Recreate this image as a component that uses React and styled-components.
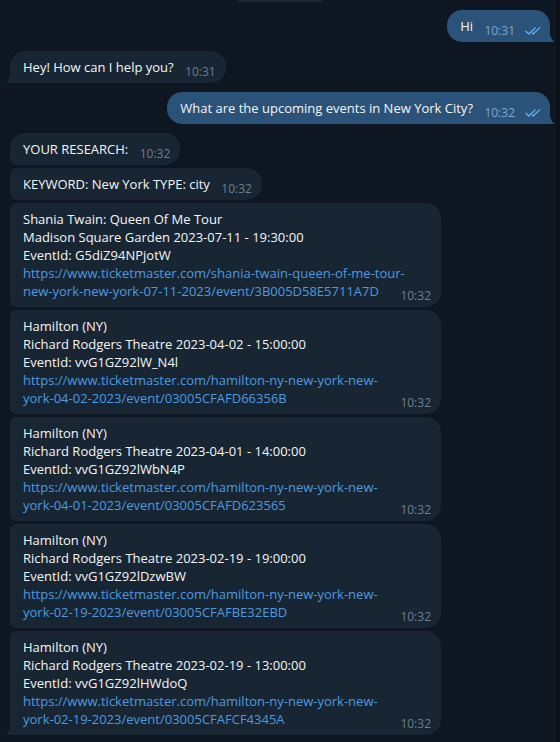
import styled, { createGlobalStyle, css } from "styled-components";

const GlobalStyle = createGlobalStyle`
  body {
    margin: 0;
    background: #0e1621;
    font-family: "Open Sans", "Noto Sans", sans-serif;
    -webkit-font-smoothing: antialiased;
  }
`;

const Page = styled.div`
  display: flex;
  height: 742px;
  overflow: hidden;
  background: #0e1621;
`;

const Feed = styled.div`
  flex: 1;
  display: flex;
  flex-direction: column;
  gap: 9px;
  padding: 0 6px 0 10px;
`;

const Scrollbar = styled.div`
  width: 4px;
  background: #0b1118;
`;

const DatePill = styled.div`
  align-self: center;
  width: 84px;
  height: 2px;
  margin-bottom: -1px;
  background: #1b2733;
  border-radius: 0 0 8px 8px;
`;

const Group = styled.div`
  display: flex;
  flex-direction: column;
  gap: 3px;
`;

const BIG = 15;
const SMALL = 6;

const radius = ({ $out, $pos }) => {
  const top = $pos === "single" || $pos === "first" ? BIG : SMALL;
  const bottom = $pos === "single" || $pos === "last" ? 0 : SMALL;
  return $out
    ? `${BIG}px ${BIG}px ${bottom}px ${BIG}px`
    : `${top}px ${BIG}px ${BIG}px ${bottom}px`;
};

const Bubble = styled.div`
  position: relative;
  align-self: ${(p) => (p.$out ? "flex-end" : "flex-start")};
  display: grid;
  box-sizing: border-box;
  width: ${(p) => (p.$full ? "431px" : "auto")};
  max-width: 431px;
  padding: 7px ${(p) => (p.$out ? 8 : 10)}px 7px 13px;
  background: ${(p) => (p.$out ? "#2b5278" : "#182533")};
  color: #f5f5f5;
  font-size: 13px;
  line-height: 18px;
  border-radius: ${radius};

  ${(p) =>
    (p.$pos === "single" || p.$pos === "last") &&
    css`
      &::after {
        content: "";
        position: absolute;
        bottom: 0;
        width: 6px;
        height: 10px;
        ${p.$out ? "right: -6px;" : "left: -6px;"}
        background: radial-gradient(
          6px 10px at ${p.$out ? "100% 0" : "0 0"},
          transparent 98%,
          ${p.$out ? "#2b5278" : "#182533"} 100%
        );
      }
    `}
`;

const Body = styled.div`
  grid-area: 1 / 1;
  white-space: nowrap;
`;

const Line = styled.div``;

const Link = styled.a`
  display: block;
  color: #4a9be0;
  text-decoration: none;
`;

const Spacer = styled.span`
  display: inline-block;
  width: ${(p) => (p.$out ? 69 : 42)}px;
`;

const Meta = styled.div`
  grid-area: 1 / 1;
  justify-self: end;
  align-self: end;
  display: flex;
  align-items: center;
  gap: 10px;
  margin-bottom: -2px;
  font-size: 12px;
  line-height: 12px;
  color: ${(p) => (p.$out ? "#7da8d3" : "#6d7f8f")};
`;

const Checks = () => (
  <svg width="17" height="8" viewBox="0 0 17 8" fill="none">
    <path
      d="M1 4.3 L3.8 7 L10.2 0.9"
      stroke="#64b5ef"
      strokeWidth="1.3"
      strokeLinecap="round"
      strokeLinejoin="round"
    />
    <path
      d="M7.2 6.1 L8.1 7 L14.6 0.9"
      stroke="#64b5ef"
      strokeWidth="1.3"
      strokeLinecap="round"
      strokeLinejoin="round"
    />
  </svg>
);

const Message = ({ out, pos = "single", full, time, children }) => (
  <Bubble $out={out} $pos={pos} $full={full}>
    <Body>{children}</Body>
    <Meta $out={out}>
      <span>{time}</span>
      {out && <Checks />}
    </Meta>
  </Bubble>
);

const Text = ({ out, children }) => (
  <Line>
    {children}
    <Spacer $out={out} />
  </Line>
);

const events = [
  {
    title: "Shania Twain: Queen Of Me Tour",
    place: "Madison Square Garden 2023-07-11 - 19:30:00",
    id: "G5diZ94NPjotW",
    url: [
      "https://www.ticketmaster.com/shania-twain-queen-of-me-tour-",
      "new-york-new-york-07-11-2023/event/3B005D58E5711A7D",
    ],
  },
  {
    title: "Hamilton (NY)",
    place: "Richard Rodgers Theatre 2023-04-02 - 15:00:00",
    id: "vvG1GZ92lW_N4l",
    url: [
      "https://www.ticketmaster.com/hamilton-ny-new-york-new-",
      "york-04-02-2023/event/03005CFAFD66356B",
    ],
  },
  {
    title: "Hamilton (NY)",
    place: "Richard Rodgers Theatre 2023-04-01 - 14:00:00",
    id: "vvG1GZ92lWbN4P",
    url: [
      "https://www.ticketmaster.com/hamilton-ny-new-york-new-",
      "york-04-01-2023/event/03005CFAFD623565",
    ],
  },
  {
    title: "Hamilton (NY)",
    place: "Richard Rodgers Theatre 2023-02-19 - 19:00:00",
    id: "vvG1GZ92lDzwBW",
    url: [
      "https://www.ticketmaster.com/hamilton-ny-new-york-new-",
      "york-02-19-2023/event/03005CFAFBE32EBD",
    ],
  },
  {
    title: "Hamilton (NY)",
    place: "Richard Rodgers Theatre 2023-02-19 - 13:00:00",
    id: "vvG1GZ92lHWdoQ",
    url: [
      "https://www.ticketmaster.com/hamilton-ny-new-york-new-",
      "york-02-19-2023/event/03005CFAFCF4345A",
    ],
  },
];

export default function App() {
  return (
    <Page>
      <GlobalStyle />
      <Feed>
        <DatePill />
        <Message out time="10:31">
          <Text out>Hi</Text>
        </Message>
        <Message time="10:31">
          <Text>Hey! How can I help you?</Text>
        </Message>
        <Message out time="10:32">
          <Text out>What are the upcoming events in New York City?</Text>
        </Message>
        <Group>
          <Message pos="first" time="10:32">
            <Text>YOUR RESEARCH:</Text>
          </Message>
          <Message pos="mid" time="10:32">
            <Text>KEYWORD: New York TYPE: city</Text>
          </Message>
          {events.map((e, i) => (
            <Message
              key={e.id}
              full
              pos={i === events.length - 1 ? "last" : "mid"}
              time="10:32"
            >
              <Line>{e.title}</Line>
              <Line>{e.place}</Line>
              <Line>EventId: {e.id}</Line>
              <Link href={e.url.join("")}>
                <Line>{e.url[0]}</Line>
                <Text>{e.url[1]}</Text>
              </Link>
            </Message>
          ))}
        </Group>
      </Feed>
      <Scrollbar />
    </Page>
  );
}
